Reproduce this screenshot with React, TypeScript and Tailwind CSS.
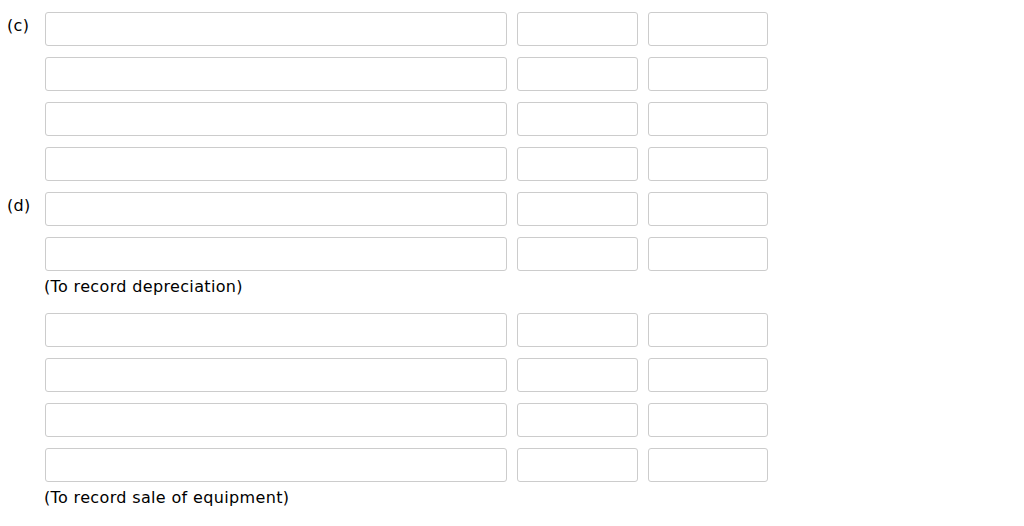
import React from "react";

function Row({ label }: { label?: string }) {
  return (
    <div className="flex items-start h-[34px]">
      <div className="w-[38px] mt-[5px] leading-[18px]">{label}</div>
      <div className="flex gap-[10px]">
        <div className="w-[462px] h-[34px] border border-[#cccccc] rounded-[3px] bg-white" />
        <div className="w-[121px] h-[34px] border border-[#cccccc] rounded-[3px] bg-white" />
        <div className="w-[120px] h-[34px] border border-[#cccccc] rounded-[3px] bg-white" />
      </div>
    </div>
  );
}

function Note({ text }: { text: string }) {
  return (
    <div className="h-[42px] pt-[7px] pl-[37px] leading-[18px]">{text}</div>
  );
}

export default function App() {
  return (
    <div
      className="w-[1024px] h-[526px] bg-white text-black text-[16px] tracking-[0.35px] pt-[12px] pl-[7px] overflow-hidden"
      style={{ fontFamily: '"DejaVu Sans", Verdana, sans-serif' }}
    >
      <div className="flex flex-col gap-[11px]">
        <Row label="(c)" />
        <Row />
        <Row />
        <Row />
        <Row label="(d)" />
        <Row />
      </div>
      <Note text="(To record depreciation)" />
      <div className="flex flex-col gap-[11px]">
        <Row />
        <Row />
        <Row />
        <Row />
      </div>
      <Note text="(To record sale of equipment)" />
    </div>
  );
}
